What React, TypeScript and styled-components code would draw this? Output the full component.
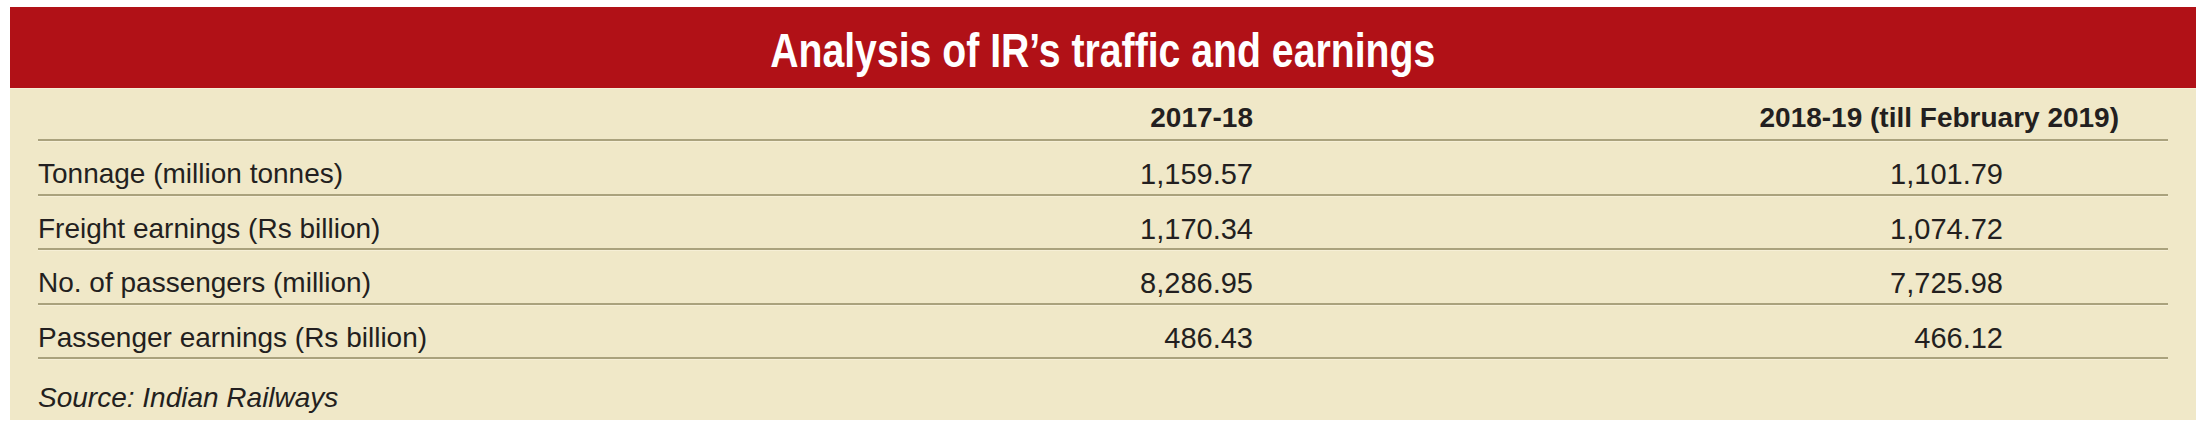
import styled, { createGlobalStyle } from 'styled-components';

const rows = [
  { label: 'Tonnage (million tonnes)', a: '1,159.57', b: '1,101.79' },
  { label: 'Freight earnings (Rs billion)', a: '1,170.34', b: '1,074.72' },
  { label: 'No. of passengers (million)', a: '8,286.95', b: '7,725.98' },
  { label: 'Passenger earnings (Rs billion)', a: '486.43', b: '466.12' },
];

export default function App() {
  return (
    <>
      <GlobalStyle />
      <SCard>
        <STitle>
          <STitleText>Analysis of IR’s traffic and earnings</STitleText>
        </STitle>
        <STable>
          <SHeadRow>
            <SHeadCell />
            <SHeadCell $pad={0}>2017-18</SHeadCell>
            <SHeadCell $pad={49}>2018-19 (till February 2019)</SHeadCell>
          </SHeadRow>
          {rows.map((r) => (
            <SRow key={r.label}>
              <SLabel>{r.label}</SLabel>
              <SValue $pad={0}>{r.a}</SValue>
              <SValue $pad={165}>{r.b}</SValue>
            </SRow>
          ))}
          <SSource>Source: Indian Railways</SSource>
        </STable>
      </SCard>
    </>
  );
}

const GlobalStyle = createGlobalStyle`
  body {
    margin: 0;
    background: #ffffff;
    font-family: 'Liberation Sans', Arial, sans-serif;
    color: #231f20;
  }
`;

const SCard = styled.section`
  margin: 7px 0 0 10px;
  width: 2186px;
  background-color: #f0e8c8;
`;

const STitle = styled.h2`
  margin: 0;
  height: 82px;
  box-sizing: border-box;
  padding-top: 4px;
  line-height: 78px;
  background-color: #b11117;
  border-bottom: 1px solid #f6efd6;
  color: #ffffff;
  text-align: center;
  font-size: 49px;
  font-weight: 700;
`;

// the print face is a condensed gothic; squeeze the bold sans to its width
const STitleText = styled.span`
  display: inline-block;
  transform: scaleX(0.8);
  transform-origin: center;
`;

const STable = styled.div`
  padding: 0 28px 0 28px;
`;

const SRowBase = styled.div`
  display: grid;
  grid-template-columns: 1fr 260px 915px;
  box-sizing: border-box;
  border-bottom: 2px solid #aaa27d;
  box-shadow: 0 1px 0 #f6efd6;
`;

const SHeadRow = styled(SRowBase)`
  height: 52px;
`;

const SRow = styled(SRowBase)`
  height: 54.5px;
`;

const SHeadCell = styled.div<{ $pad?: number }>`
  padding: 8px ${(p) => p.$pad ?? 0}px 0 0;
  line-height: 42px;
  font-size: 28px;
  font-weight: 700;
  text-align: right;
  white-space: nowrap;
`;

const SLabel = styled.div`
  padding-top: 13px;
  line-height: 40px;
  font-size: 28px;
  white-space: nowrap;
`;

const SValue = styled.div<{ $pad: number }>`
  padding: 13px ${(p) => p.$pad}px 0 0;
  line-height: 40px;
  font-size: 29px;
  text-align: right;
  white-space: nowrap;
`;

const SSource = styled.div`
  padding: 19px 0 2px;
  line-height: 40px;
  font-size: 28px;
  font-style: italic;
`;
